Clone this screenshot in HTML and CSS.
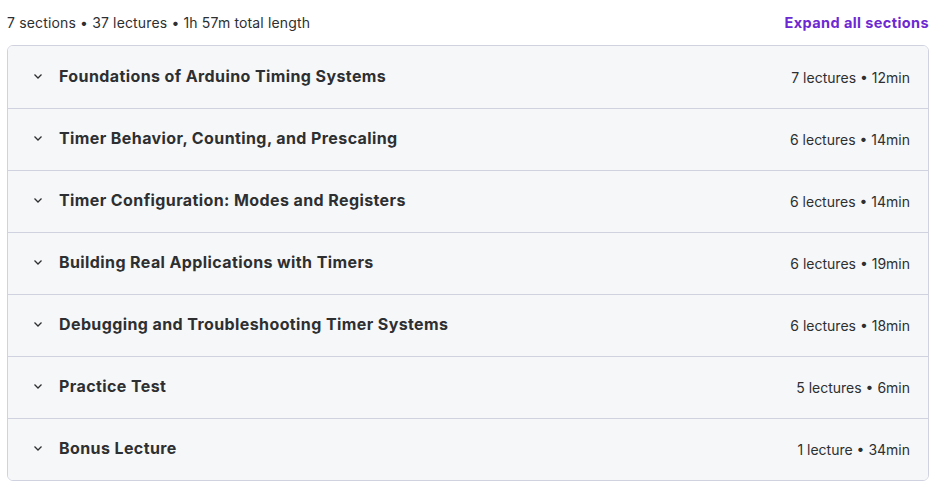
FILE: index.html
```html
<!DOCTYPE html>
<html lang="en">
<head>
    <meta charset="UTF-8">
    <meta name="viewport" content="width=device-width, initial-scale=1.0">
    <title>Course content</title>
    <link rel="stylesheet" href="styles.css">
</head>
<body>
    <div class="curriculum">
        <div class="summary">
            <span class="summary-text">7 sections • 37 lectures • 1h 57m total length</span>
            <button class="expand-all" type="button">Expand all sections</button>
        </div>

        <div class="sections">
            <div class="section">
                <svg class="chevron" viewBox="0 0 12 12"><path d="M2.5 4.5 6 8l3.5-3.5"/></svg>
                <span class="section-title">Foundations of Arduino Timing Systems</span>
                <span class="section-meta">7 lectures • 12min</span>
            </div>
            <div class="section">
                <svg class="chevron" viewBox="0 0 12 12"><path d="M2.5 4.5 6 8l3.5-3.5"/></svg>
                <span class="section-title">Timer Behavior, Counting, and Prescaling</span>
                <span class="section-meta">6 lectures • 14min</span>
            </div>
            <div class="section">
                <svg class="chevron" viewBox="0 0 12 12"><path d="M2.5 4.5 6 8l3.5-3.5"/></svg>
                <span class="section-title">Timer Configuration: Modes and Registers</span>
                <span class="section-meta">6 lectures • 14min</span>
            </div>
            <div class="section">
                <svg class="chevron" viewBox="0 0 12 12"><path d="M2.5 4.5 6 8l3.5-3.5"/></svg>
                <span class="section-title">Building Real Applications with Timers</span>
                <span class="section-meta">6 lectures • 19min</span>
            </div>
            <div class="section">
                <svg class="chevron" viewBox="0 0 12 12"><path d="M2.5 4.5 6 8l3.5-3.5"/></svg>
                <span class="section-title">Debugging and Troubleshooting Timer Systems</span>
                <span class="section-meta">6 lectures • 18min</span>
            </div>
            <div class="section">
                <svg class="chevron" viewBox="0 0 12 12"><path d="M2.5 4.5 6 8l3.5-3.5"/></svg>
                <span class="section-title">Practice Test</span>
                <span class="section-meta">5 lectures • 6min</span>
            </div>
            <div class="section">
                <svg class="chevron" viewBox="0 0 12 12"><path d="M2.5 4.5 6 8l3.5-3.5"/></svg>
                <span class="section-title">Bonus Lecture</span>
                <span class="section-meta">1 lecture • 34min</span>
            </div>
        </div>
    </div>
</body>
</html>
```
FILE: styles.css
```css
body {
    margin: 0;
    background: #fff;
    font-family: 'Inter', 'Liberation Sans', sans-serif;
    color: #2d2f31;
}
.curriculum {
    padding: 0 7px 0 7px;
}
.summary {
    height: 45px;
    display: flex;
    justify-content: space-between;
    align-items: center;
}
.summary-text {
    font-size: 14px;
    letter-spacing: 0.15px;
    color: #2d2f31;
}
.expand-all {
    background: none;
    border: none;
    padding: 0;
    font-family: inherit;
    font-size: 14.5px;
    font-weight: 700;
    letter-spacing: 0.4px;
    color: #6d28d2;
    cursor: pointer;
}
.sections {
    border: 1px solid #d1d2e0;
    border-radius: 6px;
    overflow: hidden;
}
.section {
    height: 61px;
    display: flex;
    align-items: center;
    padding: 0 18px 0 24px;
    background-color: #f6f7f9;
    border-top: 1px solid #d1d2e0;
}
.section:first-child {
    border-top: none;
    height: 62px;
}
.chevron {
    width: 12px;
    height: 12px;
    fill: none;
    stroke: #2d2f31;
    stroke-width: 1.3;
    margin-right: 15px;
    margin-bottom: 3px;
}
.section-title {
    flex: 1;
    font-size: 16px;
    font-weight: 700;
    letter-spacing: 0.4px;
    margin-bottom: 3px;
}
.section-meta {
    font-size: 14px;
}
```
